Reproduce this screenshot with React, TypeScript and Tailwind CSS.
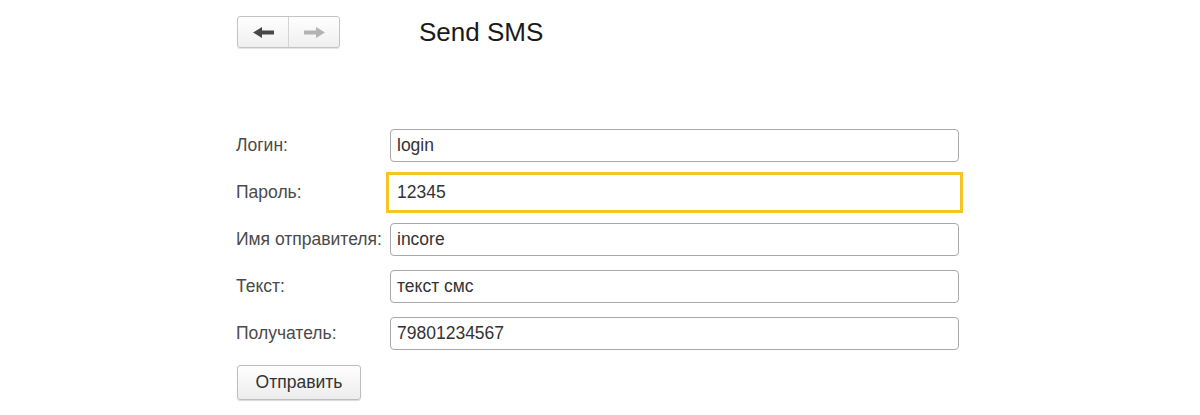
import React from "react";

const font = { fontFamily: '"Liberation Sans", Arial, sans-serif' };

function Arrow({ dir, color }: { dir: "left" | "right"; color: string }) {
  return (
    <svg width="21" height="11" viewBox="0 0 21 11" style={{ transform: dir === "right" ? "scaleX(-1)" : undefined }}>
      <path d="M0 5.5 L9 0 L9 3.5 L21 3.5 L21 7.5 L9 7.5 L9 11 Z" fill={color} />
    </svg>
  );
}

function Field({ label, value, focused }: { label: string; value: string; focused?: boolean }) {
  return (
    <div className="flex h-[33px] items-center">
      <div className="w-[154px] shrink-0 text-[17.5px] leading-none text-[#4a4a4a]">{label}</div>
      {focused ? (
        <div className="-ml-1 flex h-[41px] w-[577px] items-center border-[3px] border-[#f3c623] bg-white pl-[8px] text-[17.5px] text-[#333]">
          {value}
        </div>
      ) : (
        <div className="flex h-[33px] w-[569px] items-center rounded-[4px] border border-[#a9a9a9] bg-white pl-[6px] text-[17.5px] text-[#333]">
          {value}
        </div>
      )}
    </div>
  );
}

export default function App() {
  return (
    <div className="h-[415px] w-[1200px] bg-white pl-[237px] pt-[16px]" style={font}>
      <div className="flex items-center">
        <div className="flex h-[32px] w-[103px] rounded-[3px] border border-[#c4c4c4] bg-gradient-to-b from-white to-[#efefef] shadow-[0_1px_1px_rgba(0,0,0,0.12)]">
          <div className="flex w-[51px] items-center justify-center border-r border-[#d4d4d4]">
            <Arrow dir="left" color="#474747" />
          </div>
          <div className="flex flex-1 items-center justify-center">
            <Arrow dir="right" color="#b3b3b3" />
          </div>
        </div>
        <div className="ml-[79px] text-[26px] leading-none text-[#1a1a1a]">Send SMS</div>
      </div>

      <div className="-ml-px mt-[81px] flex flex-col gap-[14px]">
        <Field label="Логин:" value="login" />
        <Field label="Пароль:" value="12345" focused />
        <Field label="Имя отправителя:" value="incore" />
        <Field label="Текст:" value="текст смс" />
        <Field label="Получатель:" value="79801234567" />
      </div>

      <button className="mt-[15px] flex h-[35px] w-[124px] items-center justify-center rounded-[3px] border border-[#bdbdbd] bg-gradient-to-b from-white to-[#ececec] text-[17.5px] text-[#333] shadow-[0_1px_1px_rgba(0,0,0,0.15)]">
        Отправить
      </button>
    </div>
  );
}
